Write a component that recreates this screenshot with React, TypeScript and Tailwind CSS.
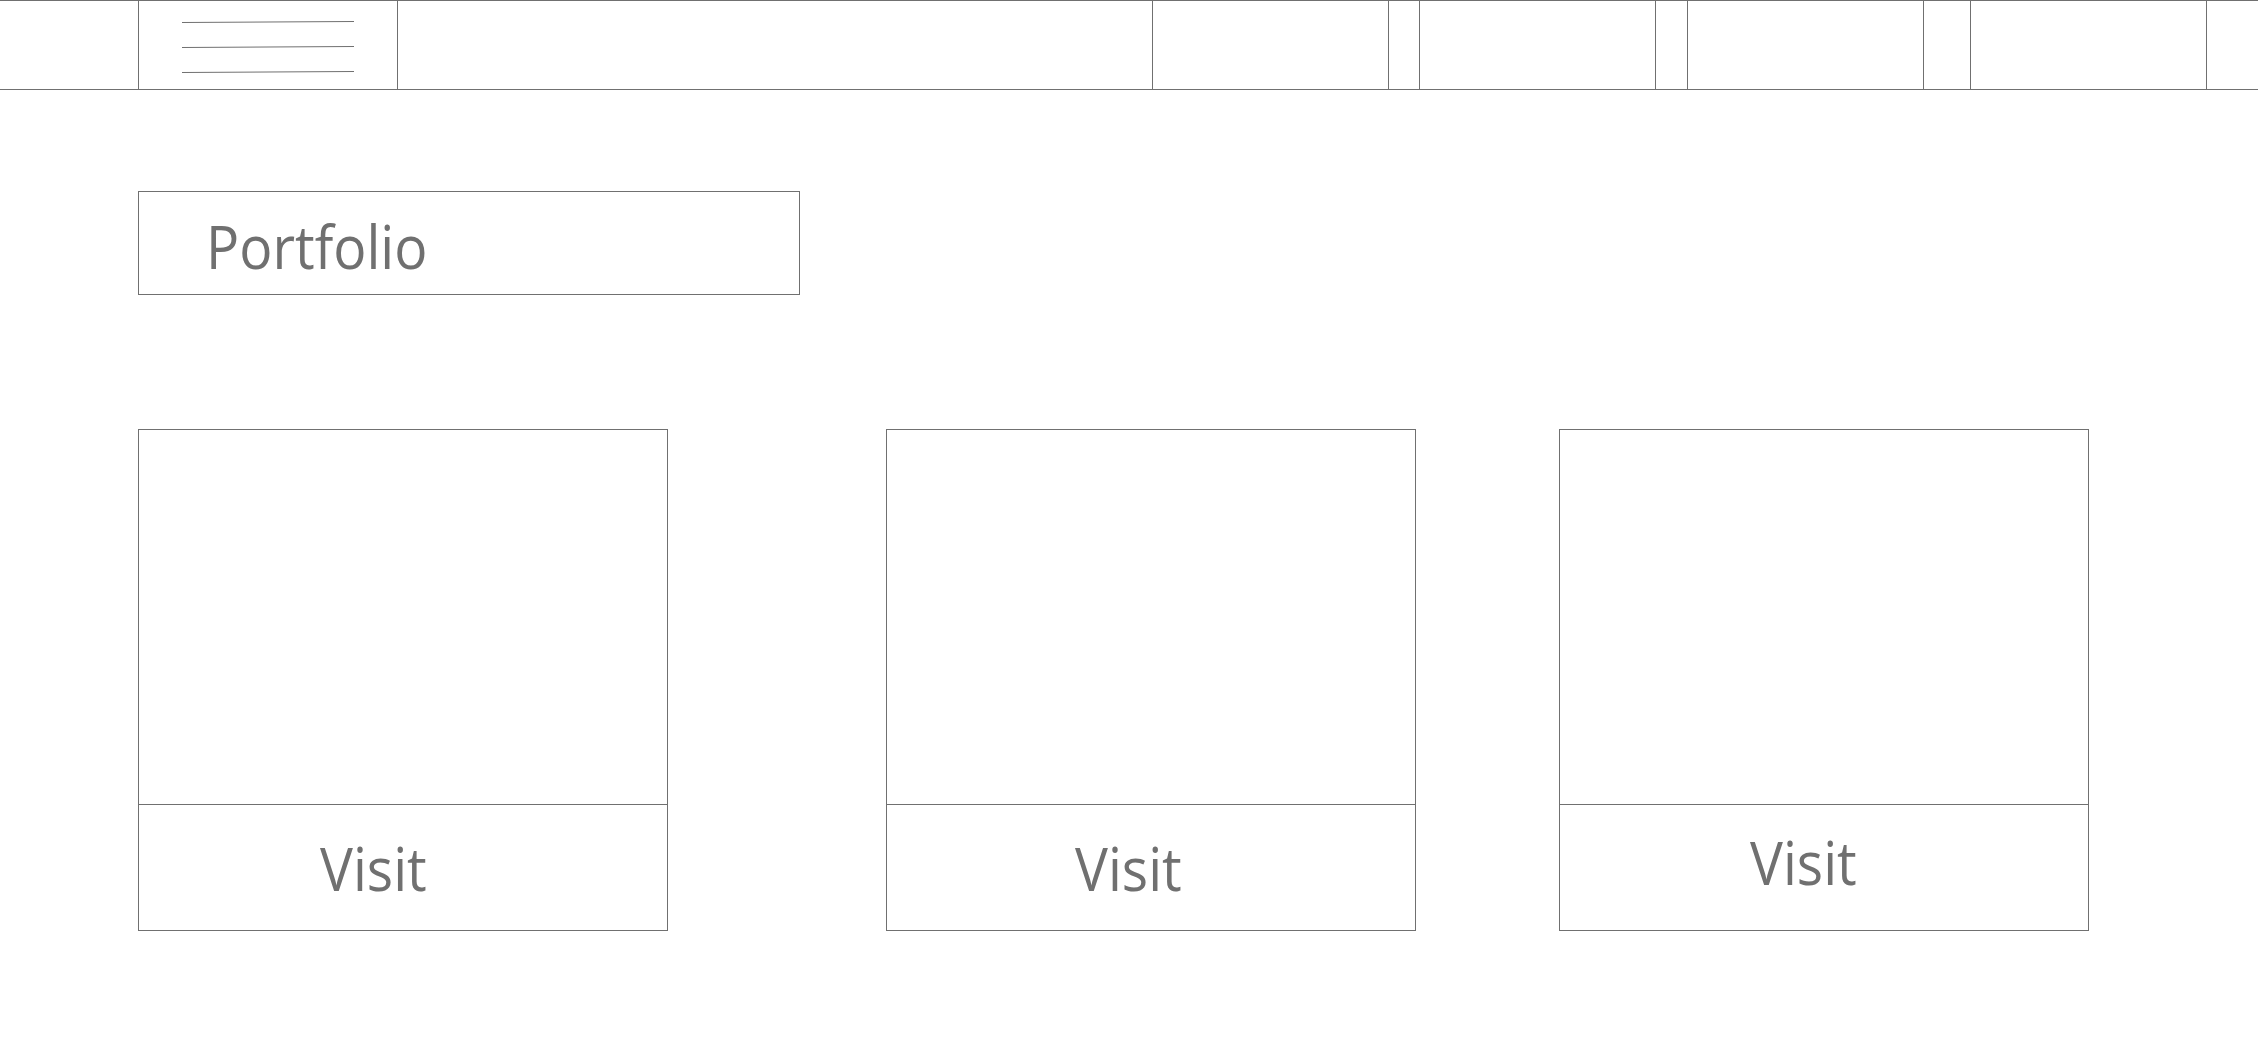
const lines = "#707070";

function Hamburger() {
  return (
    <svg width="174" height="60" viewBox="0 0 174 60" className="ml-[43px] mt-[19px]">
      <line x1="0" y1="2.5" x2="172" y2="1.5" stroke={lines} strokeWidth="1" />
      <line x1="0" y1="27.5" x2="172" y2="26.5" stroke={lines} strokeWidth="1" />
      <line x1="0" y1="52.5" x2="172" y2="51.5" stroke={lines} strokeWidth="1" />
    </svg>
  );
}

function NavBox({ className = "" }: { className?: string }) {
  return <div className={`h-full w-[237px] shrink-0 border-x border-[#707070] ${className}`} />;
}

function Card({ className, textPad }: { className: string; textPad: string }) {
  return (
    <div className={`flex h-[502px] w-[530px] shrink-0 flex-col border border-[#707070] ${className}`}>
      <div className="h-[375px] border-b border-[#707070]" />
      <div className={`flex-1 ${textPad}`}>
        <span className="inline-block origin-left scale-x-[0.92] text-[60px] leading-[60px] text-[#707070]">
          Visit
        </span>
      </div>
    </div>
  );
}

export default function App() {
  return (
    <div className="min-h-[1059px] w-full bg-white font-['Open_Sans',sans-serif]">
      {/* Top bar */}
      <header className="flex h-[90px] items-stretch border-y border-[#707070] pl-[138px]">
        <div className="h-full w-[260px] shrink-0 border-x border-[#707070]">
          <Hamburger />
        </div>
        <NavBox className="ml-[754px]" />
        <NavBox className="ml-[30px]" />
        <NavBox className="ml-[31px]" />
        <NavBox className="ml-[46px]" />
      </header>

      <main className="pl-[138px]">
        <div className="mt-[101px] h-[104px] w-[662px] border border-[#707070] pl-[67px] pt-[24px]">
          <span className="inline-block origin-left scale-x-[0.92] text-[60px] leading-[60px] text-[#707070]">
            Portfolio
          </span>
        </div>

        <div className="mt-[134px] flex">
          <Card className="" textPad="pl-[181px] pt-[33px]" />
          <Card className="ml-[218px]" textPad="pl-[188px] pt-[33px]" />
          <Card className="ml-[143px]" textPad="pl-[190px] pt-[27px]" />
        </div>
      </main>
    </div>
  );
}
